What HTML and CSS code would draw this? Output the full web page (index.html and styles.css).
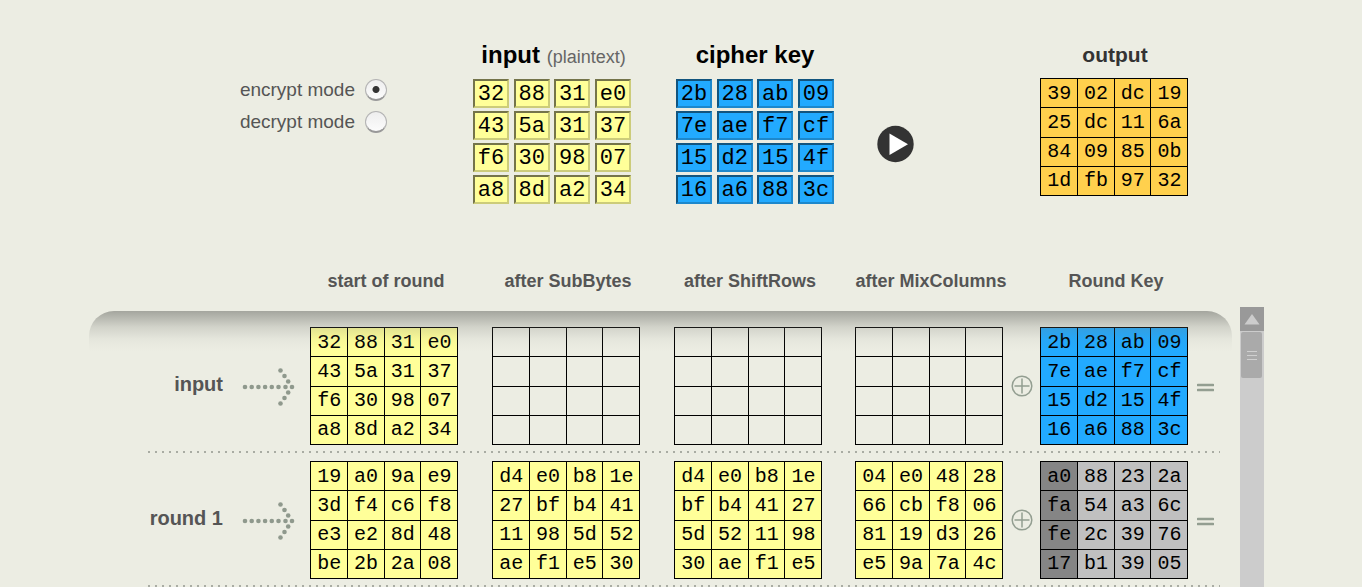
FILE: index.html
```
<!DOCTYPE html>
<html lang="en">
<head>
<meta charset="utf-8">
<title>AES cipher steps</title>
<link rel="stylesheet" href="styles.css">
</head>
<body>
<main class="page">
  <section class="setup">
    <form class="modes">
      <label class="mode">encrypt mode <input type="radio" name="mode" checked></label>
      <label class="mode">decrypt mode <input type="radio" name="mode"></label>
    </form>
    <div class="block">
      <h1 class="title title-input">input <small>(plaintext)</small></h1>
      <div class="bytes bytes-plain" data-label="input byte" data-bytes="32 88 31 e0 43 5a 31 37 f6 30 98 07 a8 8d a2 34"></div>
    </div>
    <div class="block">
      <h1 class="title">cipher key</h1>
      <div class="bytes bytes-key" data-label="key byte" data-bytes="2b 28 ab 09 7e ae f7 cf 15 d2 15 4f 16 a6 88 3c"></div>
    </div>
    <button class="play" type="button" aria-label="Play">
      <svg width="38" height="38" viewBox="0 0 38 38"><circle cx="18.500" cy="19" r="18.200" fill="#333"/><path d="M12.500 8.500V30L31 19.200z" fill="#fff"/></svg>
    </button>
    <div class="block">
      <h1 class="title title-output">output</h1>
      <table class="state orange" data-bytes="39 02 dc 19 25 dc 11 6a 84 09 85 0b 1d fb 97 32"></table>
    </div>
  </section>

  <section class="columns">
    <h2 class="c-start">start of round</h2>
    <h2 class="c-sub">after SubBytes</h2>
    <h2 class="c-shift">after ShiftRows</h2>
    <h2 class="c-mix">after MixColumns</h2>
    <h2 class="c-key">Round Key</h2>
  </section>

  <section class="viewer">
    <div class="rounds">
      <div class="round">
        <h3 class="name">input</h3>
        <svg class="arrow" width="54" height="38"><use href="#arrow"/></svg>
        <table class="state yellow" data-bytes="32 88 31 e0 43 5a 31 37 f6 30 98 07 a8 8d a2 34"></table>
        <table class="state" data-bytes=""></table>
        <table class="state" data-bytes=""></table>
        <table class="state" data-bytes=""></table>
        <svg class="xor" width="22" height="22"><use href="#xor"/></svg>
        <table class="state blue" data-bytes="2b 28 ab 09 7e ae f7 cf 15 d2 15 4f 16 a6 88 3c"></table>
        <svg class="equals" width="17" height="9"><use href="#equals"/></svg>
      </div>
      <div class="round">
        <h3 class="name">round 1</h3>
        <svg class="arrow" width="54" height="38"><use href="#arrow"/></svg>
        <table class="state yellow" data-bytes="19 a0 9a e9 3d f4 c6 f8 e3 e2 8d 48 be 2b 2a 08"></table>
        <table class="state yellow" data-bytes="d4 e0 b8 1e 27 bf b4 41 11 98 5d 52 ae f1 e5 30"></table>
        <table class="state yellow" data-bytes="d4 e0 b8 1e bf b4 41 27 5d 52 11 98 30 ae f1 e5"></table>
        <table class="state yellow" data-bytes="04 e0 48 28 66 cb f8 06 81 19 d3 26 e5 9a 7a 4c"></table>
        <svg class="xor" width="22" height="22"><use href="#xor"/></svg>
        <table class="state gray" data-bytes="a0 88 23 2a fa 54 a3 6c fe 2c 39 76 17 b1 39 05"></table>
        <svg class="equals" width="17" height="9"><use href="#equals"/></svg>
      </div>
    </div>
    <div class="scrollbar">
      <button class="scroll-up" type="button" aria-label="Scroll up"><svg width="16" height="11" viewBox="0 0 16 11"><path d="M8 0l7.500 10.500H.5z" fill="#ccc"/></svg></button>
      <div class="thumb"><svg width="12" height="11"><path d="M1 1.500h10M1 5.500h10M1 9.500h10" stroke="#d0d0d0"/></svg></div>
    </div>
  </section>
</main>

<svg class="symbols" aria-hidden="true">
  <symbol id="arrow" viewBox="0 0 54 38">
    <g fill="#8f998d">
      <circle cx="3" cy="19" r="2.300"/><circle cx="9.700" cy="19" r="2.300"/><circle cx="16.400" cy="19" r="2.300"/><circle cx="23.100" cy="19" r="2.300"/><circle cx="29.800" cy="19" r="2.300"/><circle cx="36.500" cy="19" r="2.300"/><circle cx="43.500" cy="19" r="2.300"/><circle cx="50" cy="19" r="2.300"/>
      <circle cx="38.500" cy="2.500" r="2.300"/><circle cx="42.500" cy="8" r="2.300"/><circle cx="46.200" cy="13.500" r="2.300"/><circle cx="46.200" cy="24.500" r="2.300"/><circle cx="42.500" cy="30" r="2.300"/><circle cx="38.500" cy="35.500" r="2.300"/>
    </g>
  </symbol>
  <symbol id="xor" viewBox="0 0 22 22"><g fill="none" stroke="#939e91" stroke-width="1.500"><circle cx="11" cy="11" r="9.800"/><path d="M11 3.500v15M3.500 11h15"/></g></symbol>
  <symbol id="equals" viewBox="0 0 17 9"><path d="M1 2h15M1 7h15" stroke="#939e91" stroke-width="2.600" stroke-linecap="round"/></symbol>
</svg>
<script src="script.js"></script>
</body>
</html>
```
FILE: styles.css
```
* { box-sizing: border-box; }

body {
  margin: 0;
  background: #ecede3;
  color: #555;
  font-family: "Liberation Sans", Arial, sans-serif;
}

h1, h2, h3 { margin: 0; line-height: 24px; }

.symbols { display: none; }

.page {
  display: flex;
  flex-direction: column;
  height: 100vh;
  max-width: 1184px;
  margin: 0 auto;
  padding: 43px 9px 0 0;
}

/* Top area: mode, input, key, output */
.setup {
  display: grid;
  grid-template-columns: 384fr 203fr 201fr 163fr 224fr;
  align-items: start;
}

.modes {
  display: flex;
  flex-direction: column;
  align-items: flex-end;
  gap: 10px;
  padding: 36px 86px 0 0;
}

.mode {
  display: flex;
  align-items: center;
  gap: 10px;
  font-size: 19px;
  line-height: 22px;
}

.mode input {
  appearance: none;
  width: 22px;
  height: 22px;
  margin: 0;
  border: 1px solid #b4b4b4;
  border-bottom: 2px solid #999;
  border-radius: 50%;
  background: linear-gradient(#eee, #fcfcfc);
}

.mode input:checked {
  background: radial-gradient(circle, #333 3px, transparent 4px), linear-gradient(#eee, #fcfcfc);
}

.block { width: 158px; }
.block:last-child { width: 148px; }

.title {
  height: 24px;
  margin-bottom: 12px;
  color: #000;
  font-size: 24px;
  text-align: center;
  white-space: nowrap;
}

.title-input { padding-left: 3px; }
.title small { color: #666; font-size: 18px; font-weight: 400; }
.title-output { margin-bottom: 11px; padding-left: 2px; color: #333; font-size: 21px; }

.bytes {
  display: grid;
  grid-template-columns: repeat(4, 36px);
  justify-content: space-between;
  row-gap: 3px;
}

.bytes input {
  width: 36px;
  height: 29px;
  padding: 1px 0 0;
  border: 2px solid;
  color: #000;
  font: 22px "Liberation Mono", "Courier New", monospace;
  text-align: center;
}

.bytes-plain input { background: #ff9; border-color: #74744a #cccc7a #cccc7a #74744a; }
.bytes-key input { background: #2af; border-color: #12547e #1d88cc #1d88cc #12547e; }

.play {
  width: 38px;
  height: 38px;
  margin-top: 82px;
  padding: 0;
  border: 0;
  background: none;
}

.play svg { display: block; }

/* State matrices */
.state {
  width: 148px;
  height: 118px;
  border-collapse: collapse;
  table-layout: fixed;
  color: #000;
  font: 20px/26px "Liberation Mono", "Courier New", monospace;
}

.state td {
  padding: 1px 0 0 1px;
  border: 1px solid #000;
  text-align: center;
}

.orange td { background: #ffd04d; }
.yellow td { background: #ff9; }
.blue td { background: #2af; }
.gray td { background: #c0c0c0; }
.gray td:first-child { background: #858585; }

/* Column captions share the tracks of a round */
.columns, .round {
  display: grid;
  grid-template-columns:
    minmax(0, 75fr) minmax(0, 87fr) minmax(0, 182fr) minmax(0, 182fr) minmax(0, 181fr)
    minmax(0, 148fr) minmax(0, 37fr) minmax(0, 148fr) minmax(0, 32fr);
}

.columns {
  margin: 65px 44px 0 59px;
}

.columns h2 {
  width: 152px;
  font-size: 18px;
  text-align: center;
  white-space: nowrap;
}

.c-start { grid-column: 3; }
.c-sub { grid-column: 4; }
.c-shift { grid-column: 5; }
.c-mix { grid-column: 6; }
.c-key { grid-column: 8; }

/* Rounds */
.viewer {
  display: flex;
  flex: 1;
  gap: 8px;
  min-height: 0;
  margin-top: 14px;
}

.rounds {
  position: relative;
  flex: 1;
  margin-top: 4px;
  padding: 8px 12px 0 59px;
  overflow: hidden;
}

.rounds::after {
  content: "";
  position: absolute;
  inset: 0 0 auto;
  height: 40px;
  border-radius: 25px 25px 0 0;
  background: linear-gradient(rgba(116, 118, 112, 0.6), rgba(116, 118, 112, 0.22) 40%, rgba(116, 118, 112, 0.06) 70%, rgba(116, 118, 112, 0));
  pointer-events: none;
}

.round {
  align-items: center;
  height: 134px;
  background: repeating-linear-gradient(90deg, #a9aca3 0 2px, transparent 2px 7px) left bottom / 100% 2px no-repeat;
}

.name {
  padding-bottom: 4px;
  font-size: 20px;
  text-align: right;
  white-space: nowrap;
}

.arrow { margin: 2px 0 0 19px; }
.xor { justify-self: center; }
.equals { margin-top: 2px; justify-self: end; margin-right: 6px; }

.scrollbar { width: 24px; background: #ccc; }

.scroll-up {
  display: flex;
  align-items: center;
  justify-content: center;
  width: 100%;
  height: 24px;
  padding: 0;
  border: 0;
  background: #999;
}

.thumb {
  display: flex;
  align-items: center;
  justify-content: center;
  height: 46px;
  margin: 1px 2px 0 1px;
  border-radius: 2px;
  background: #aaa;
}
```
FILE: script.js
```
document.querySelectorAll(".state").forEach((table) => {
  const bytes = table.dataset.bytes.split(" ");
  for (let r = 0; r < 4; r++) {
    const row = table.insertRow();
    for (let c = 0; c < 4; c++) {
      row.insertCell().textContent = bytes[r * 4 + c] || "";
    }
  }
});

document.querySelectorAll(".bytes").forEach((grid) => {
  grid.dataset.bytes.split(" ").forEach((value, i) => {
    const field = document.createElement("input");
    field.type = "text";
    field.maxLength = 2;
    field.value = value;
    field.setAttribute("aria-label", grid.dataset.label + " " + (i + 1));
    grid.append(field);
  });
});
```
